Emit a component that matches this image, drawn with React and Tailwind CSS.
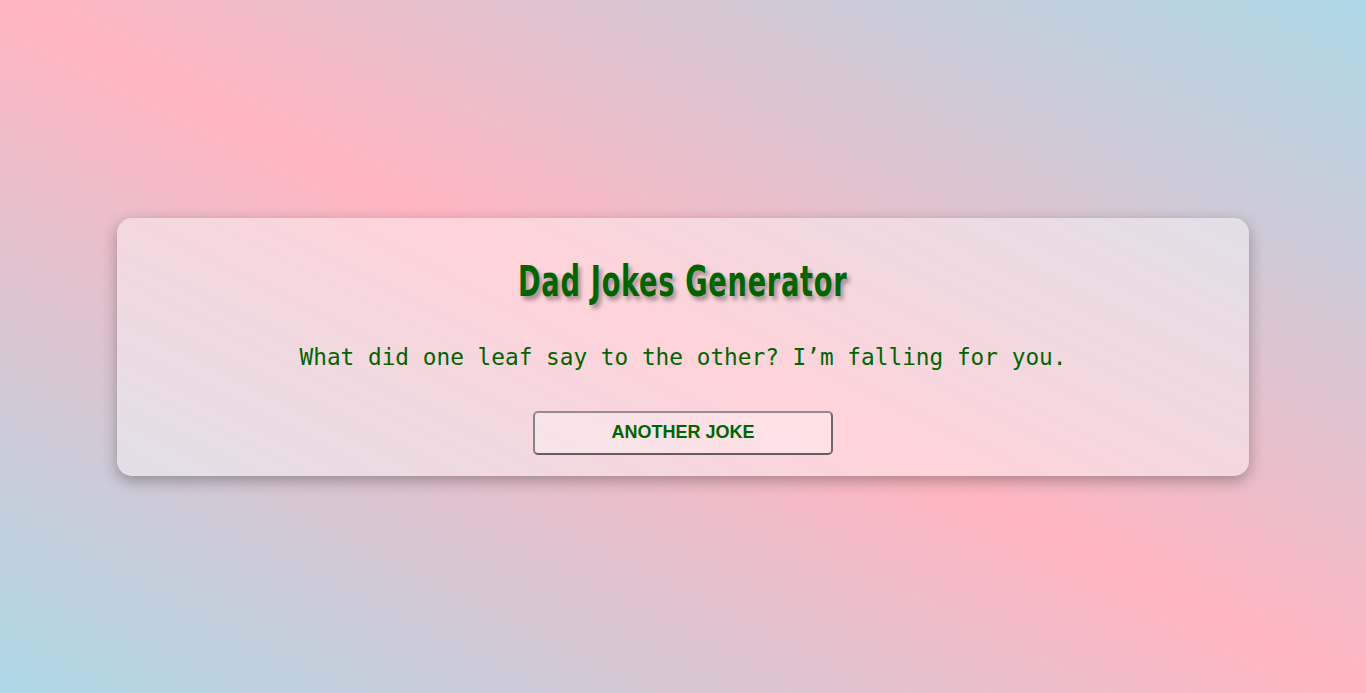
export default function App() {
  return (
    <div className="min-h-screen flex items-center justify-center bg-[linear-gradient(to_top_right,#add8e6,#ffb6c1,#add8e6)]">
      <div className="w-[1132px] rounded-[15px] bg-white/40 px-5 pt-5 pb-[21px] text-center shadow-[0_5px_15px_rgba(0,0,0,0.3)]">
        <h1 className="mt-5 text-[42px] leading-[48px] font-bold text-[#006400] [font-family:'DejaVu_Sans_Condensed','Liberation_Sans_Narrow',sans-serif] [font-stretch:condensed]">
          <span className="inline-block scale-x-[0.72] tracking-[1px] [text-shadow:4px_4px_5px_rgba(0,0,0,0.35)]">
            Dad Jokes Generator
          </span>
        </h1>
        <p className="mt-[35px] text-[22.75px] leading-8 text-[#006400] [font-family:'DejaVu_Sans_Mono',monospace]">
          What did one leaf say to the other? I’m falling for you.
        </p>
        <button className="mt-[38px] h-11 w-[300px] rounded-[5px] border-2 border-t-[#978b91] border-l-[#8a8085] border-b-[#645c60] border-r-[#6e666a] bg-white/30 text-[18px] font-bold text-[#006400] [font-family:'Liberation_Sans',Arial,sans-serif]">
          ANOTHER JOKE
        </button>
      </div>
    </div>
  );
}
